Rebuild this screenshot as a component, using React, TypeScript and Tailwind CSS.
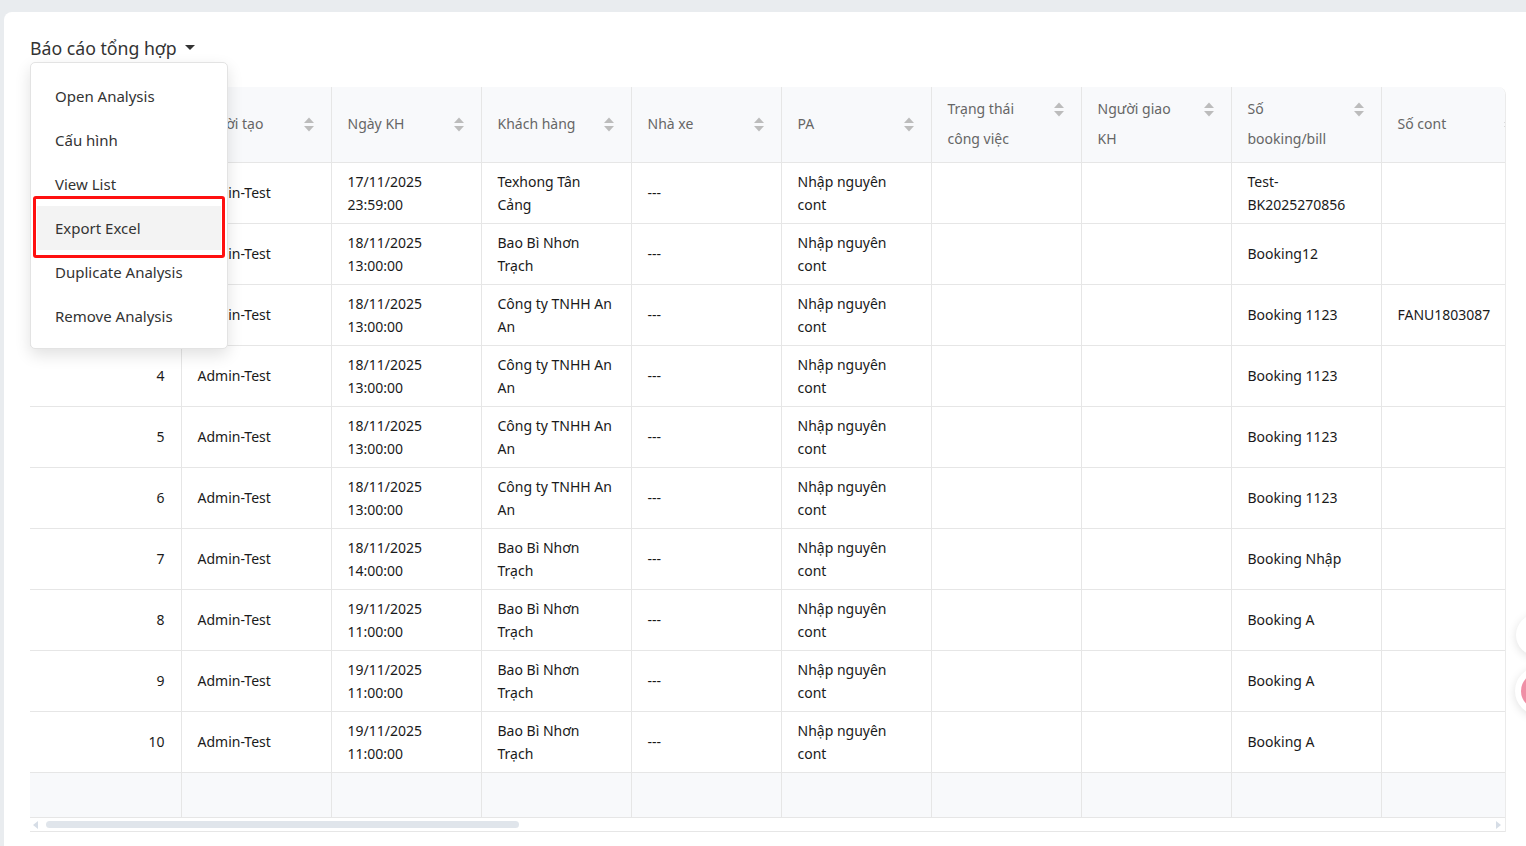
import React from 'react';

type Row = {
  no: number;
  creator: string;
  date: string[];
  customer: string[];
  carrier: string;
  pa: string[];
  status: string;
  handler: string;
  booking: string[];
  cont: string;
};

const menu = ['Open Analysis', 'Cấu hình', 'View List', 'Export Excel', 'Duplicate Analysis', 'Remove Analysis'];

const columns: { title: string[]; align?: 'right' }[] = [
  { title: ['#'], align: 'right' },
  { title: ['Người tạo'] },
  { title: ['Ngày KH'] },
  { title: ['Khách hàng'] },
  { title: ['Nhà xe'] },
  { title: ['PA'] },
  { title: ['Trạng thái', 'công việc'] },
  { title: ['Người giao', 'KH'] },
  { title: ['Số', 'booking/bill'] },
  { title: ['Số cont'] },
];

const anAn = ['Công ty TNHH An', 'An'];
const nhonTrach = ['Bao Bì Nhơn', 'Trạch'];
const nhap = ['Nhập nguyên', 'cont'];

const rows: Row[] = [
  { no: 1, creator: 'Admin-Test', date: ['17/11/2025', '23:59:00'], customer: ['Texhong Tân', 'Cảng'], carrier: '---', pa: nhap, status: '', handler: '', booking: ['Test-', 'BK2025270856'], cont: '' },
  { no: 2, creator: 'Admin-Test', date: ['18/11/2025', '13:00:00'], customer: nhonTrach, carrier: '---', pa: nhap, status: '', handler: '', booking: ['Booking12'], cont: '' },
  { no: 3, creator: 'Admin-Test', date: ['18/11/2025', '13:00:00'], customer: anAn, carrier: '---', pa: nhap, status: '', handler: '', booking: ['Booking 1123'], cont: 'FANU1803087' },
  { no: 4, creator: 'Admin-Test', date: ['18/11/2025', '13:00:00'], customer: anAn, carrier: '---', pa: nhap, status: '', handler: '', booking: ['Booking 1123'], cont: '' },
  { no: 5, creator: 'Admin-Test', date: ['18/11/2025', '13:00:00'], customer: anAn, carrier: '---', pa: nhap, status: '', handler: '', booking: ['Booking 1123'], cont: '' },
  { no: 6, creator: 'Admin-Test', date: ['18/11/2025', '13:00:00'], customer: anAn, carrier: '---', pa: nhap, status: '', handler: '', booking: ['Booking 1123'], cont: '' },
  { no: 7, creator: 'Admin-Test', date: ['18/11/2025', '14:00:00'], customer: nhonTrach, carrier: '---', pa: nhap, status: '', handler: '', booking: ['Booking Nhập'], cont: '' },
  { no: 8, creator: 'Admin-Test', date: ['19/11/2025', '11:00:00'], customer: nhonTrach, carrier: '---', pa: nhap, status: '', handler: '', booking: ['Booking A'], cont: '' },
  { no: 9, creator: 'Admin-Test', date: ['19/11/2025', '11:00:00'], customer: nhonTrach, carrier: '---', pa: nhap, status: '', handler: '', booking: ['Booking A'], cont: '' },
  { no: 10, creator: 'Admin-Test', date: ['19/11/2025', '11:00:00'], customer: nhonTrach, carrier: '---', pa: nhap, status: '', handler: '', booking: ['Booking A'], cont: '' },
];

function SortIcon() {
  return (
    <svg width="12" height="17" viewBox="0 0 12 17" className="shrink-0">
      <polygon points="1,7 6,1.5 11,7" fill="#bcbcbc" />
      <polygon points="1,10 6,15.5 11,10" fill="#bcbcbc" />
    </svg>
  );
}

function Lines({ lines }: { lines: string[] }) {
  return (
    <>
      {lines.map((l, i) => (
        <div key={i}>{l}</div>
      ))}
    </>
  );
}

export default function App() {
  return (
    <div className="min-h-screen bg-[#e9ecef] pl-1 pt-3 font-['Noto_Sans',sans-serif]">
      <div className="min-h-[834px] rounded-tl-lg bg-white pl-[26px] pr-5 pt-6">
        {/* title + dropdown */}
        <div className="relative z-20">
          <button className="flex h-6 items-center gap-2 text-[17.7px] leading-6 text-[#333]">
            Báo cáo tổng hợp
            <svg width="10" height="6" viewBox="0 0 10 6">
              <polygon points="0,0 10,0 5,5" fill="#333" />
            </svg>
          </button>

          <div className="absolute left-0 top-[26px] w-[198px] rounded-[5px] border border-[#e3e3e3] bg-white pb-[10px] pt-[11px] shadow-[0_6px_16px_rgba(0,0,0,0.12)]">
            {menu.map((m) =>
              m === 'Export Excel' ? (
                <div key={m} className="mx-[6px] flex h-11 items-center bg-[#f3f3f3] pl-[18px] text-[15px] text-[#333]">
                  {m}
                </div>
              ) : (
                <div key={m} className="flex h-11 items-center pl-6 text-[15px] text-[#333]">
                  {m}
                </div>
              ),
            )}
            <div className="pointer-events-none absolute left-[2px] top-[133px] h-[62px] w-[192px] rounded-[3px] border-[3px] border-[#ff1010]" />
          </div>
        </div>

        {/* table */}
        <div className="mt-[27px] overflow-hidden rounded-tr-lg border-r border-[#ebebeb] text-[14px] text-[#1a1a1a]">
          <table className="w-[1501px] table-fixed border-collapse">
            <colgroup>
              <col className="w-[151px]" />
              {columns.slice(1).map((c) => (
                <col key={c.title.join()} className="w-[150px]" />
              ))}
            </colgroup>
            <thead>
              <tr className="h-[75px] bg-[#f8f9fb]">
                {columns.map((c, i) => (
                  <th
                    key={i}
                    className={`border-b border-[#e6e6e6] px-4 py-[7px] text-left align-middle font-normal text-[#666] ${i > 0 ? 'border-l' : ''}`}
                  >
                    <div className="flex items-start justify-between gap-2">
                      <div className="leading-[30px]">
                        <Lines lines={c.title} />
                      </div>
                      <div className="flex h-[30px] items-center">
                        <SortIcon />
                      </div>
                    </div>
                  </th>
                ))}
              </tr>
            </thead>
            <tbody>
              {rows.map((r) => {
                const cells = [[String(r.no)], [r.creator], r.date, r.customer, [r.carrier], r.pa, [r.status], [r.handler], r.booking, [r.cont]];
                return (
                  <tr key={r.no} className="h-[61px]">
                    {cells.map((c, i) => (
                      <td
                        key={i}
                        className={`border-b border-[#e6e6e6] px-4 align-middle leading-[23px] ${i === 0 ? 'text-right' : 'border-l'}`}
                      >
                        <Lines lines={c} />
                      </td>
                    ))}
                  </tr>
                );
              })}
              <tr className="h-[45px] bg-[#f8f9fb]">
                {columns.map((_, i) => (
                  <td key={i} className={i > 0 ? 'border-l border-[#e6e6e6]' : ''} />
                ))}
              </tr>
            </tbody>
          </table>

          {/* scrollbar */}
          <div className="relative h-[15px] border-y border-[#e6e6e6] bg-white">
            <svg width="6" height="8" viewBox="0 0 6 8" className="absolute left-[3px] top-[3px]">
              <polygon points="5,0 5,8 0,4" fill="#d6dde6" />
            </svg>
            <div className="absolute left-4 top-[3px] h-[7px] w-[473px] rounded-full bg-[#e0e5eb]" />
            <svg width="6" height="8" viewBox="0 0 6 8" className="absolute right-[4px] top-[3px]">
              <polygon points="1,0 1,8 6,4" fill="#d6dde6" />
            </svg>
          </div>
        </div>
      </div>

      {/* floating buttons at the right edge */}
      <div className="fixed left-[1516px] top-[614px] h-[42px] w-[42px] rounded-full bg-white shadow-[0_2px_10px_rgba(0,0,0,0.12)]" />
      <div className="fixed left-[1515px] top-[667px] flex h-[48px] w-[48px] items-center justify-center rounded-full bg-white shadow-[0_2px_10px_rgba(0,0,0,0.12)]">
        <div className="h-[36px] w-[36px] rounded-full bg-[#ef8fa6]" />
      </div>
    </div>
  );
}
